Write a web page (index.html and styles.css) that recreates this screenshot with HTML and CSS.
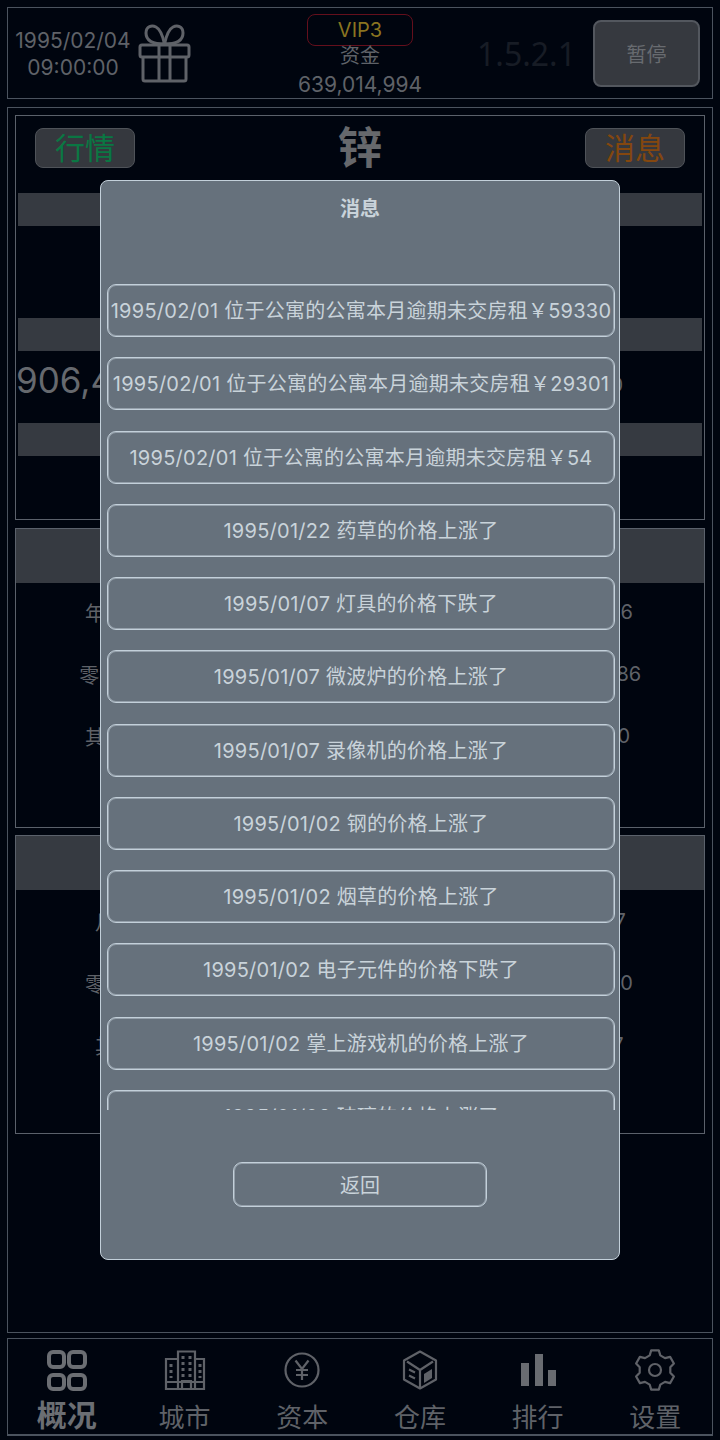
FILE: index.html
```html
<!DOCTYPE html>
<html lang="en">

<head>
    <meta charset="UTF-8">
    <meta name="viewport" content="width=device-width, initial-scale=1.0">
    <title>消息</title>
    <link rel="stylesheet" href="styles.css">
</head>

<body>

    <div class="topbar">
        <div class="top-left">
            <div class="date">1995/02/04<br>09:00:00</div>
            <svg class="gift" viewBox="0 0 54 60" fill="none" stroke="#5f6268" stroke-width="3" stroke-linejoin="round">
                <path d="M26.5 21C18 21 8 19 8 10C8 3 14 2 18 4C22 6 25 14 26.5 21Z" />
                <path d="M26.5 21C35 21 45 19 45 10C45 3 39 2 35 4C31 6 28 14 26.5 21Z" />
                <rect x="2" y="22" width="49" height="12" rx="2" />
                <path d="M5 34V56a2 2 0 0 0 2 2H46a2 2 0 0 0 2-2V34" />
                <path d="M21 22V58M32 22V58" />
            </svg>
        </div>
        <div class="top-center">
            <div class="vip">VIP3</div>
            <div class="fund-label">资金</div>
            <div class="fund-value">639,014,994</div>
        </div>
        <div class="top-right">
            <div class="version">1.5.2.1</div>
            <button class="pause">暂停</button>
        </div>
    </div>

    <div class="main">
        <div class="section first">
            <div class="section-head">
                <button class="tag green">行情</button>
                <div class="metal">锌</div>
                <button class="tag orange">消息</button>
            </div>
            <div class="strip"></div>
            <div class="gap"></div>
            <div class="strip"></div>
            <div class="hero">
                <span class="hero-num">906,412,350</span>
                <span class="hero-side">12,350</span>
            </div>
            <div class="strip"></div>
        </div>

        <div class="section">
            <div class="band"></div>
            <div class="rows up">
                <div class="row"><span>年度总收入</span><span>650,006</span></div>
                <div class="row"><span>零售业收入 :</span><span>9,650,086</span></div>
                <div class="row"><span>其他总收入</span><span>650,100</span></div>
            </div>
        </div>

        <div class="section last">
            <div class="band"></div>
            <div class="rows">
                <div class="row"><span>月度收入</span><span>65,007</span></div>
                <div class="row"><span>零售业收入</span><span>650,000</span></div>
                <div class="row"><span>其他收入</span><span>65,017</span></div>
            </div>
        </div>
    </div>

    <div class="tabs">
        <div class="tab active">
            <svg viewBox="0 0 48 48" fill="none" stroke="#6b6e73" stroke-width="4">
                <rect x="6" y="6" width="15" height="15" rx="4" />
                <rect x="26" y="6" width="16" height="15" rx="4" />
                <rect x="6" y="29" width="15" height="14" rx="4" />
                <rect x="26" y="29" width="16" height="14" rx="4" />
            </svg>
            <span>概况</span>
        </div>
        <div class="tab">
            <svg viewBox="0 0 48 48" fill="none" stroke="#5f6268" stroke-width="2.2">
                <path d="M17 13H5V43H43V13H34" />
                <path d="M17 43V5.500H34V43" />
                <path d="M5 36H43M21 43V35H30V43" />
                <path d="M10 18V32M39 18V32M22 10V32M29 10V32" stroke-width="3" stroke-dasharray="3 3" />
            </svg>
            <span>城市</span>
        </div>
        <div class="tab">
            <svg viewBox="0 0 48 48" fill="none" stroke="#5f6268" stroke-width="2.2">
                <circle cx="24" cy="24" r="16.500" />
                <path d="M17.500 14.500L24 23L30.500 14.500M24 23V34M18 24H30M18 29H30" />
            </svg>
            <span>资本</span>
        </div>
        <div class="tab">
            <svg viewBox="0 0 48 48" fill="none" stroke="#5f6268" stroke-width="2.2" stroke-linejoin="round">
                <path d="M24 5.500L40 14.500V33.500L24 42.500L8 33.500V14.500Z" />
                <path d="M11 15.500L24 24L37 15.500M24 24V41" />
                <path d="M13 23.500L19 26.500M13 29.500L19 32.500" stroke-width="2" />
                <path d="M28 28L36 23V32L28 37Z" fill="#5f6268" stroke="none" />
            </svg>
            <span>仓库</span>
        </div>
        <div class="tab">
            <svg viewBox="0 0 48 48" fill="#696c71">
                <rect x="7" y="17" width="8" height="23" />
                <rect x="21" y="8" width="8" height="32" />
                <rect x="34" y="24" width="8" height="16" />
            </svg>
            <span>排行</span>
        </div>
        <div class="tab">
            <svg viewBox="0 0 48 48" fill="none" stroke="#5f6268" stroke-width="2.2" stroke-linejoin="round">
                <path d="M20.200 4.400H27.800L29.300 9.400L34 12.100L39.100 10.900L42.900 17.500L39.300 21.300V26.700L42.900 30.500L39.100 37.100L34 35.900L29.300 38.600L27.800 43.600H20.200L18.700 38.600L14 35.900L8.900 37.100L5.100 30.500L8.700 26.700V21.300L5.100 17.500L8.900 10.900L14 12.100L18.700 9.400Z" />
                <circle cx="24" cy="24" r="6" />
            </svg>
            <span>设置</span>
        </div>
    </div>

    <div class="modal">
        <div class="modal-title">消息</div>
        <div class="modal-list">
            <div class="msg">1995/02/01 位于公寓的公寓本月逾期未交房租￥59330</div>
            <div class="msg">1995/02/01 位于公寓的公寓本月逾期未交房租￥29301</div>
            <div class="msg">1995/02/01 位于公寓的公寓本月逾期未交房租￥54</div>
            <div class="msg">1995/01/22 药草的价格上涨了</div>
            <div class="msg">1995/01/07 灯具的价格下跌了</div>
            <div class="msg">1995/01/07 微波炉的价格上涨了</div>
            <div class="msg">1995/01/07 录像机的价格上涨了</div>
            <div class="msg">1995/01/02 钢的价格上涨了</div>
            <div class="msg">1995/01/02 烟草的价格上涨了</div>
            <div class="msg">1995/01/02 电子元件的价格下跌了</div>
            <div class="msg">1995/01/02 掌上游戏机的价格上涨了</div>
            <div class="msg">1995/01/02 玻璃的价格上涨了</div>
        </div>
        <button class="back">返回</button>
    </div>

</body>

</html>
```

FILE: styles.css
```css
* {
    box-sizing: border-box;
}

body {
    font-family: Inter, "Noto Sans CJK SC", sans-serif;
    background-color: #00050f;
    color: #5f6268;
    margin: 0;
    padding: 7px;
    width: 720px;
    height: 1440px;
    position: relative;
    overflow: hidden;
}

button {
    font-family: inherit;
    padding: 0;
}

/* Top bar */
.topbar {
    height: 92px;
    border: 1px solid #4b535e;
    display: flex;
    align-items: center;
}

.top-left {
    width: 242px;
    display: flex;
    align-items: center;
}

.date {
    width: 130px;
    padding-top: 2px;
    text-align: center;
    font-size: 21px;
    line-height: 27px;
}

.gift {
    width: 54px;
    height: 60px;
}

.top-center {
    width: 220px;
    align-self: flex-start;
    padding-top: 6px;
    display: flex;
    flex-direction: column;
    align-items: center;
}

.vip {
    width: 106px;
    height: 32px;
    border: 1px solid #640f1c;
    border-radius: 8px;
    color: #8a7420;
    font-size: 20px;
    line-height: 30px;
    text-align: center;
}

.fund-label {
    font-size: 20px;
    line-height: 20px;
}

.fund-value {
    font-size: 21px;
    line-height: 28px;
    margin-top: 5px;
}

.top-right {
    width: 242px;
    display: flex;
    align-items: center;
}

.version {
    width: 99px;
    margin-left: 7px;
    margin-right: 17px;
    font-family: "Noto Sans", sans-serif;
    font-size: 32px;
    color: #171c25;
    white-space: nowrap;
}

.pause {
    width: 107px;
    height: 67px;
    background-color: #36393f;
    border: 2px solid #53575e;
    border-radius: 8px;
    color: #686b70;
    font-size: 20px;
}

/* Main panel */
.main {
    height: 1226px;
    margin-top: 8px;
    border: 1px solid #4b535e;
    padding: 7px;
}

.section {
    height: 300px;
    margin-top: 8px;
    border: 1px solid #5b616b;
}

.section.first {
    height: 405px;
    margin-top: 0;
    padding: 0 2px;
}

.section.last {
    height: 299px;
    margin-top: 7px;
}

.section-head {
    height: 77px;
    padding: 12px 17px 0;
    display: flex;
    justify-content: space-between;
    align-items: flex-start;
}

.tag {
    width: 100px;
    height: 40px;
    background-color: #35383e;
    border: 1px solid #4f5359;
    border-radius: 8px;
    font-size: 30px;
    line-height: 36px;
}

.tag.green {
    color: #0a7743;
}

.tag.orange {
    color: #84470f;
}

.metal {
    color: #66686c;
    font-size: 44px;
    font-weight: bold;
    line-height: 40px;
}

.strip {
    height: 33px;
    background-color: #363a41;
}

.gap {
    height: 92px;
}

.hero {
    height: 72px;
    padding: 0 79px 14px 0;
    display: flex;
    justify-content: space-between;
    align-items: center;
    white-space: nowrap;
}

.hero-num {
    margin-left: -2px;
    font-size: 35px;
    color: #66696e;
}

.hero-side {
    margin-top: 10px;
    font-size: 20px;
}

.band {
    height: 54px;
    background-color: #363a41;
}

.rows {
    display: flex;
    flex-direction: column;
}

.rows.up {
    margin-top: -2px;
}

.row {
    height: 62px;
    display: grid;
    grid-template-columns: 238px 1fr 222px;
    align-items: center;
    font-size: 20px;
    white-space: nowrap;
}

.row span {
    text-align: center;
}

.row span:last-child {
    grid-column: 3;
}

/* Bottom tabs */
.tabs {
    height: 98px;
    margin-top: 5px;
    border: 1px solid #4b535e;
    border-bottom-width: 2px;
    display: grid;
    grid-template-columns: repeat(6, 117.7px);
}

.tab {
    display: flex;
    flex-direction: column;
    align-items: center;
    padding-top: 7px;
    font-size: 26px;
    line-height: 48px;
}

.tab svg {
    width: 48px;
    height: 48px;
    flex-shrink: 0;
}

.tab.active {
    font-size: 30px;
    font-weight: bold;
    color: #6b6e73;
    line-height: 42px;
}

/* Message dialog */
.modal {
    position: absolute;
    left: 100px;
    top: 180px;
    width: 520px;
    height: 1080px;
    background-color: #66717c;
    border: 1px solid #c3d0da;
    border-radius: 8px;
    color: #c9d3da;
    display: flex;
    flex-direction: column;
    align-items: center;
}

.modal-title {
    height: 103px;
    padding-top: 16px;
    font-size: 20px;
    font-weight: bold;
    line-height: 24px;
}

.modal-list {
    width: 100%;
    height: 826px;
    padding: 0 4px 0 6px;
    overflow: hidden;
    flex-shrink: 0;
}

.msg {
    height: 53px;
    margin-bottom: 20.27px;
    padding-bottom: 2px;
    border: 1px solid #c3d0da;
    box-shadow: inset 0 0 0 1px rgba(195, 208, 218, 0.5);
    border-radius: 9px;
    display: flex;
    justify-content: center;
    align-items: center;
    font-size: 20px;
    letter-spacing: 0.25px;
    white-space: nowrap;
}

.back {
    width: 254px;
    height: 45px;
    margin-top: 52px;
    background: none;
    border: 1px solid #c3d0da;
    box-shadow: inset 0 0 0 1px rgba(195, 208, 218, 0.5);
    border-radius: 9px;
    color: #c9d3da;
    font-size: 20px;
}
```
